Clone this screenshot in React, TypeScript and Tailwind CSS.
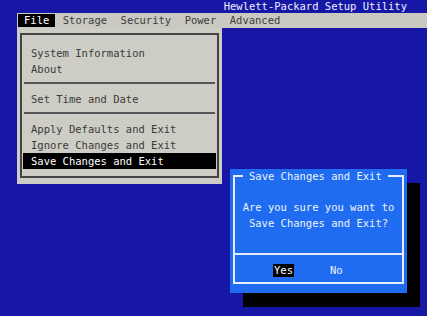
export default function App() {
    return (
        <div
            className="relative w-[427px] h-[316px] overflow-hidden bg-[#1717a6] text-[10.5px]"
            style={{ fontFamily: '"DejaVu Sans Mono", "Liberation Mono", monospace' }}
        >
            <div className="h-[13px] flex items-center justify-end pr-[20px] text-[#f0f0ff] leading-none">
                Hewlett-Packard Setup Utility
            </div>

            <MenuBar />
            <FileMenu />
            <Dialog />
        </div>
    )
}

function MenuBar() {
    const items = ["Storage", "Security", "Power", "Advanced"]
    return (
        <div className="ml-[17px] h-[15px] py-[1px] bg-[#c9c9c2] flex gap-[1.5px] text-[#3c3c3c] leading-none">
            <div className="ml-[1px] px-[6px] flex items-center bg-black text-white">File</div>
            {items.map((item) => (
                <div key={item} className="px-[6px] flex items-center">{item}</div>
            ))}
        </div>
    )
}

function Row({ label, active }: { label: string; active?: boolean }) {
    return (
        <div
            className={`h-[16px] mx-[1px] px-[8px] flex items-center leading-none ${
                active ? "bg-black text-white" : "text-[#3a3a3a]"
            }`}
        >
            {label}
        </div>
    )
}

function FileMenu() {
    return (
        <div className="absolute left-[17px] top-[28px] w-[205px] h-[156px] bg-[#cdcdc6] pt-[5px] px-[3px] pb-[6px]">
            <div className="h-full border-2 border-[#454545] pt-[10px]">
                <Row label="System Information" />
                <Row label="About" />
                <div className="mx-[2px] mt-[5px] mb-[7px] h-[2px] bg-[#555]"></div>
                <Row label="Set Time and Date" />
                <div className="mx-[2px] mt-[5px] mb-[7px] h-[2px] bg-[#555]"></div>
                <Row label="Apply Defaults and Exit" />
                <Row label="Ignore Changes and Exit" />
                <Row label="Save Changes and Exit" active />
            </div>
        </div>
    )
}

function Dialog() {
    return (
        <div className="absolute left-[230px] top-[169px] w-[177px] h-[124px] bg-[#1f6cf0] shadow-[13px_14px_0_0_#000] pt-[6px] px-[3px] pb-[9px] text-[#eef3ff]">
            <div className="relative h-full border-2 border-[#e6edff] flex flex-col">
                <div className="absolute -top-[8px] left-[8px] px-[6px] bg-[#1f6cf0] leading-[14px]">
                    Save Changes and Exit
                </div>
                <div className="h-[76px] pt-[23px] flex flex-col items-center leading-[15.5px]">
                    <div>Are you sure you want to</div>
                    <div>Save Changes and Exit?</div>
                </div>
                <div className="h-[2px] bg-[#e6edff]"></div>
                <div className="flex-1 flex items-center pt-[3px] pl-[38px] gap-[36px] leading-[13px]">
                    <div className="px-[1px] bg-black text-white">Yes</div>
                    <div>No</div>
                </div>
            </div>
        </div>
    )
}
